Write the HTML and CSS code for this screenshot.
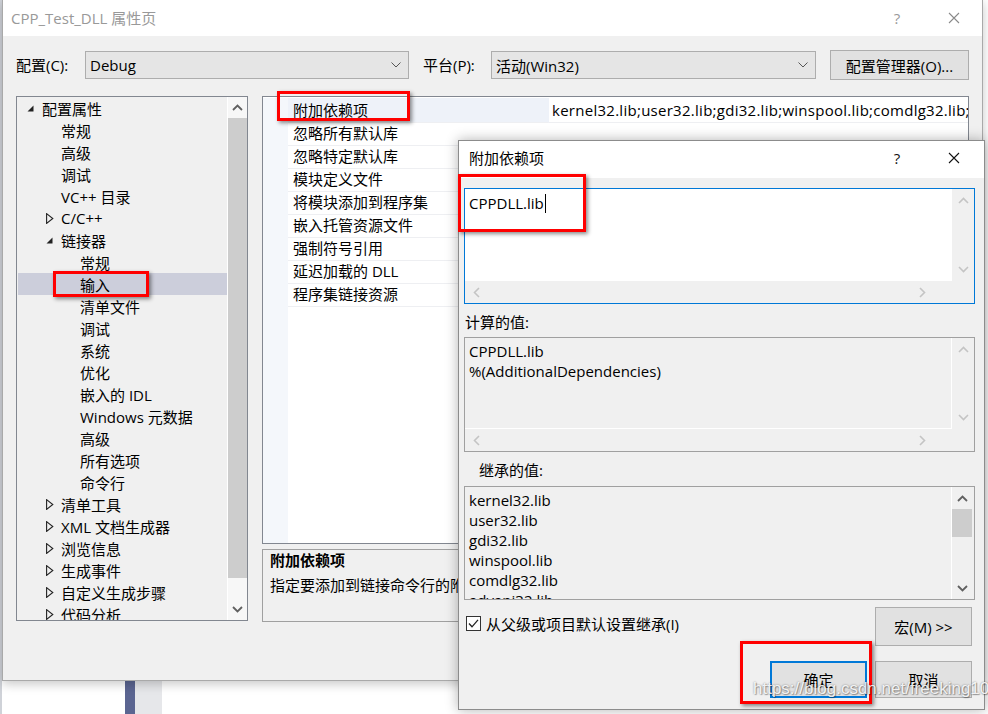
FILE: index.html
```html
<!DOCTYPE html>
<html lang="zh-CN">
<head>
<meta charset="utf-8">
<title>CPP_Test_DLL 属性页</title>
<link rel="stylesheet" href="styles.css">
</head>
<body>
<div class="edge"></div>
<div class="deskbar1"></div>
<div class="deskbar2"></div>

<div class="win main">
  <div class="titlebar">
    <span class="title">CPP_Test_DLL 属性页</span>
    <span class="cap help inactive">?</span>
    <span class="cap"><svg width="12" height="12" viewBox="0 0 12 12"><path d="M1 1L11 11M11 1L1 11" stroke="#8a8a8a" stroke-width="1.1" fill="none"/></svg></span>
  </div>
  <div class="mbody">
    <div class="cfgrow">
      <span class="lbl l1">配置(C):</span>
      <div class="combo c1"><span>Debug</span><svg width="10" height="6" viewBox="0 0 10 6"><polyline points="0.5,0.5 5,5 9.5,0.5" fill="none" stroke="#555" stroke-width="1"/></svg></div>
      <span class="lbl l2">平台(P):</span>
      <div class="combo c2"><span>活动(Win32)</span><svg width="10" height="6" viewBox="0 0 10 6"><polyline points="0.5,0.5 5,5 9.5,0.5" fill="none" stroke="#555" stroke-width="1"/></svg></div>
      <div class="btn cfgmgr">配置管理器(O)...</div>
    </div>
    <div class="content">
      <div class="tree">
        <div class="tlist">
          <div class="trow lv0"><span class="tg"><svg width="7" height="7" viewBox="0 0 7 7"><polygon points="6.5,0.5 6.5,6.5 0.5,6.5" fill="#222"/></svg></span>配置属性</div>
          <div class="trow lv1"><span class="tg"></span>常规</div>
          <div class="trow lv1"><span class="tg"></span>高级</div>
          <div class="trow lv1"><span class="tg"></span>调试</div>
          <div class="trow lv1"><span class="tg"></span>VC++ 目录</div>
          <div class="trow lv1"><span class="tg"><svg width="8" height="11" viewBox="0 0 8 11"><polygon points="0.6,0.6 6.8,5.5 0.6,10.4" fill="none" stroke="#222" stroke-width="1.1"/></svg></span>C/C++</div>
          <div class="trow lv1"><span class="tg"><svg width="7" height="7" viewBox="0 0 7 7"><polygon points="6.5,0.5 6.5,6.5 0.5,6.5" fill="#222"/></svg></span>链接器</div>
          <div class="trow lv2"><span class="tg"></span>常规</div>
          <div class="trow lv2 sel"><span class="tg"></span>输入</div>
          <div class="trow lv2"><span class="tg"></span>清单文件</div>
          <div class="trow lv2"><span class="tg"></span>调试</div>
          <div class="trow lv2"><span class="tg"></span>系统</div>
          <div class="trow lv2"><span class="tg"></span>优化</div>
          <div class="trow lv2"><span class="tg"></span>嵌入的 IDL</div>
          <div class="trow lv2"><span class="tg"></span>Windows 元数据</div>
          <div class="trow lv2"><span class="tg"></span>高级</div>
          <div class="trow lv2"><span class="tg"></span>所有选项</div>
          <div class="trow lv2"><span class="tg"></span>命令行</div>
          <div class="trow lv1"><span class="tg"><svg width="8" height="11" viewBox="0 0 8 11"><polygon points="0.6,0.6 6.8,5.5 0.6,10.4" fill="none" stroke="#222" stroke-width="1.1"/></svg></span>清单工具</div>
          <div class="trow lv1"><span class="tg"><svg width="8" height="11" viewBox="0 0 8 11"><polygon points="0.6,0.6 6.8,5.5 0.6,10.4" fill="none" stroke="#222" stroke-width="1.1"/></svg></span>XML 文档生成器</div>
          <div class="trow lv1"><span class="tg"><svg width="8" height="11" viewBox="0 0 8 11"><polygon points="0.6,0.6 6.8,5.5 0.6,10.4" fill="none" stroke="#222" stroke-width="1.1"/></svg></span>浏览信息</div>
          <div class="trow lv1"><span class="tg"><svg width="8" height="11" viewBox="0 0 8 11"><polygon points="0.6,0.6 6.8,5.5 0.6,10.4" fill="none" stroke="#222" stroke-width="1.1"/></svg></span>生成事件</div>
          <div class="trow lv1"><span class="tg"><svg width="8" height="11" viewBox="0 0 8 11"><polygon points="0.6,0.6 6.8,5.5 0.6,10.4" fill="none" stroke="#222" stroke-width="1.1"/></svg></span>自定义生成步骤</div>
          <div class="trow lv1"><span class="tg"><svg width="8" height="11" viewBox="0 0 8 11"><polygon points="0.6,0.6 6.8,5.5 0.6,10.4" fill="none" stroke="#222" stroke-width="1.1"/></svg></span>代码分析</div>
        </div>
        <div class="tscroll">
          <div class="sbtn"><svg width="11" height="7" viewBox="0 0 11 7"><polyline points="1,6 5.5,1.5 10,6" fill="none" stroke="#606060" stroke-width="1.8"/></svg></div>
          <div class="sthumb"></div>
          <div class="strack"></div>
          <div class="sbtn"><svg width="11" height="7" viewBox="0 0 11 7"><polyline points="1,1 5.5,5.5 10,1" fill="none" stroke="#606060" stroke-width="1.8"/></svg></div>
        </div>
      </div>
      <div class="rightcol">
        <div class="pgrid">
          <div class="prow first"><span class="pm"></span><span class="pn">附加依赖项</span><span class="pv">kernel32.lib;user32.lib;gdi32.lib;winspool.lib;comdlg32.lib;advapi32.lib</span></div>
          <div class="prow"><span class="pm"></span><span class="pn">忽略所有默认库</span><span class="pv"></span></div>
          <div class="prow"><span class="pm"></span><span class="pn">忽略特定默认库</span><span class="pv"></span></div>
          <div class="prow"><span class="pm"></span><span class="pn">模块定义文件</span><span class="pv"></span></div>
          <div class="prow"><span class="pm"></span><span class="pn">将模块添加到程序集</span><span class="pv"></span></div>
          <div class="prow"><span class="pm"></span><span class="pn">嵌入托管资源文件</span><span class="pv"></span></div>
          <div class="prow"><span class="pm"></span><span class="pn">强制符号引用</span><span class="pv"></span></div>
          <div class="prow"><span class="pm"></span><span class="pn">延迟加载的 DLL</span><span class="pv"></span></div>
          <div class="prow"><span class="pm"></span><span class="pn">程序集链接资源</span><span class="pv"></span></div>
          <div class="pfill"><span class="pm"></span></div>
        </div>
        <div class="desc">
          <div class="dtitle-b">附加依赖项</div>
          <div class="dtext">指定要添加到链接命令行的附加项。[例如 kernel32.lib]</div>
        </div>
      </div>
    </div>
  </div>
</div>

<div class="win dlg">
  <div class="dtitle">
    <span class="dname">附加依赖项</span>
    <span class="cap help">?</span>
    <span class="cap"><svg width="12" height="12" viewBox="0 0 12 12"><path d="M1 1L11 11M11 1L1 11" stroke="#111" stroke-width="1.1" fill="none"/></svg></span>
  </div>
  <div class="dbody">
    <div class="box edit">
      <div class="boxtext"><span>CPPDLL.lib</span><span class="caret"></span></div>
      <div class="vs">
        <svg width="11" height="7" viewBox="0 0 11 7"><polyline points="1,6 5.5,1.5 10,6" fill="none" stroke="#c4c4c4" stroke-width="1.6"/></svg>
        <svg width="11" height="7" viewBox="0 0 11 7"><polyline points="1,1 5.5,5.5 10,1" fill="none" stroke="#c4c4c4" stroke-width="1.6"/></svg>
      </div>
      <div class="hs">
        <svg width="7" height="11" viewBox="0 0 7 11"><polyline points="6,1 1.5,5.5 6,10" fill="none" stroke="#c4c4c4" stroke-width="1.6"/></svg>
        <svg width="7" height="11" viewBox="0 0 7 11"><polyline points="1,1 5.5,5.5 1,10" fill="none" stroke="#c4c4c4" stroke-width="1.6"/></svg>
      </div>
      <div class="corner"></div>
    </div>
    <div class="dlabel">计算的值:</div>
    <div class="box ro">
      <div class="boxtext"><div>CPPDLL.lib</div><div>%(AdditionalDependencies)</div></div>
      <div class="vs">
        <svg width="11" height="7" viewBox="0 0 11 7"><polyline points="1,6 5.5,1.5 10,6" fill="none" stroke="#c4c4c4" stroke-width="1.6"/></svg>
        <svg width="11" height="7" viewBox="0 0 11 7"><polyline points="1,1 5.5,5.5 10,1" fill="none" stroke="#c4c4c4" stroke-width="1.6"/></svg>
      </div>
      <div class="hs">
        <svg width="7" height="11" viewBox="0 0 7 11"><polyline points="6,1 1.5,5.5 6,10" fill="none" stroke="#c4c4c4" stroke-width="1.6"/></svg>
        <svg width="7" height="11" viewBox="0 0 7 11"><polyline points="1,1 5.5,5.5 1,10" fill="none" stroke="#c4c4c4" stroke-width="1.6"/></svg>
      </div>
      <div class="corner"></div>
    </div>
    <div class="dlabel l2">继承的值:</div>
    <div class="box inh">
      <div class="boxtext">
        <div>kernel32.lib</div>
        <div>user32.lib</div>
        <div>gdi32.lib</div>
        <div>winspool.lib</div>
        <div>comdlg32.lib</div>
        <div>advapi32.lib</div>
      </div>
      <div class="vs2">
        <div class="sbtn2"><svg width="11" height="7" viewBox="0 0 11 7"><polyline points="1,6 5.5,1.5 10,6" fill="none" stroke="#606060" stroke-width="1.8"/></svg></div>
        <div class="thumb2"></div>
        <div class="track2"></div>
        <div class="sbtn2"><svg width="11" height="7" viewBox="0 0 11 7"><polyline points="1,1 5.5,5.5 10,1" fill="none" stroke="#606060" stroke-width="1.8"/></svg></div>
      </div>
    </div>
    <div class="dfoot">
      <div class="frow1">
        <div class="chk"><span class="cbox"><svg width="13" height="13" viewBox="0 0 13 13"><polyline points="2,6.5 5,9.8 11,2.8" fill="none" stroke="#222" stroke-width="1.3"/></svg></span><span>从父级或项目默认设置继承(I)</span></div>
        <div class="btn dbtn">宏(M) &gt;&gt;</div>
      </div>
      <div class="frow2">
        <div class="btn dbtn ok">确定</div>
        <div class="btn dbtn">取消</div>
      </div>
    </div>
  </div>
</div>

<div class="mark m1"></div>
<div class="mark m2"></div>
<div class="mark m3"></div>
<div class="mark m4"></div>
<div class="wm">https://blog.csdn.net/freeking101</div>
</body>
</html>
```
FILE: styles.css
```css
* { box-sizing: border-box; }
body {
  margin: 0;
  width: 988px;
  height: 714px;
  position: relative;
  overflow: hidden;
  background: #fff;
  font-family: "Open Sans", "Noto Sans CJK SC", sans-serif;
  font-size: 15px;
  color: #000;
}
.edge { position: absolute; left: 0; top: 0; width: 2px; height: 714px; background: #cfd2d8; }
.deskbar1 { position: absolute; left: 125px; top: 681px; width: 10px; height: 33px; background: #5b6591; }
.deskbar2 { position: absolute; left: 135px; top: 681px; width: 27px; height: 33px; background: #e6e7ea; }

.win { position: absolute; display: flex; flex-direction: column; }
.main {
  left: 2px; top: 0; width: 981px; height: 681px;
  border: 1px solid #a9a9a9; border-top: none;
  background: #f0f0f0;
  box-shadow: 0 3px 10px rgba(0,0,0,.22);
}
.titlebar { height: 36px; flex: none; background: #fff; display: flex; align-items: center; padding-left: 8px; padding-right: 5px; padding-bottom: 1px; }
.title { flex: 1; color: #999; line-height: 20px; }
.cap { width: 46px; height: 36px; display: flex; align-items: center; justify-content: center; color: #111; }
.cap.help { margin-right: 11px; }
.cap.inactive { color: #999; }

.mbody { flex: 1; padding: 14px 0 0 13px; display: flex; flex-direction: column; }
.cfgrow { height: 30px; display: flex; align-items: center; }
.lbl { line-height: 20px; }
.l1 { width: 69px; }
.l2 { width: 68px; margin-left: 14px; }
.combo {
  height: 28px; border: 1px solid #adadad; background: #e5e5e5;
  display: flex; align-items: center; justify-content: space-between;
  padding: 0 7px 0 4px;
}
.c1 { width: 324px; }
.c2 { width: 325px; }
.btn {
  border: 1px solid #adadad; background: #e1e1e1;
  display: flex; align-items: center; justify-content: center;
}
.cfgmgr { width: 139px; height: 30px; margin-left: 14px; }

.content { margin-top: 16px; display: flex; gap: 14px; }
.tree { width: 232px; height: 525px; border: 1px solid #828790; background: #f0f0f0; display: flex; overflow: hidden; }
.tlist { flex: 1; padding-top: 0; overflow: hidden; }
.trow { height: 22px; display: flex; align-items: center; white-space: nowrap; }
.tg { width: 16px; flex: none; display: flex; align-items: center; padding-left: 1px; }
.lv0 { padding-left: 9px; }
.lv1 { padding-left: 28px; }
.lv2 { padding-left: 47px; }
.sel { background: #cccedb; margin-left: 1px; padding-left: 46px; }
.tscroll { width: 20px; flex: none; display: flex; flex-direction: column; background: #f7f7f7; border-left: 1px solid #fff; }
.sbtn { height: 21px; display: flex; align-items: center; justify-content: center; flex: none; }
.sthumb { height: 460px; background: #cdcdcd; flex: none; }
.strack { flex: 1; }

.rightcol { width: 707px; display: flex; flex-direction: column; }
.pgrid { height: 448px; border: 1px solid #828790; background: #fff; padding-top: 1px; display: flex; flex-direction: column; overflow: hidden; }
.prow { height: 23px; flex: none; display: grid; grid-template-columns: 25px 260px 1fr; }
.pm { background: #f4f7fb; }
.pn { padding-left: 5px; line-height: 24px; border-bottom: 1px solid #eeeff2; white-space: nowrap; }
.pv { padding-left: 3px; line-height: 24px; border-bottom: 1px solid #eeeff2; white-space: nowrap; overflow: hidden; letter-spacing: 0.27px; }
.prow.first .pn { background: #eef2f9; }
.prow.first .pv { border-left: 1px solid #eef2f9; }
.pfill { flex: 1; display: grid; grid-template-columns: 25px 1fr; }
.desc { margin-top: 5px; height: 73px; border: 1px solid #a0a0a0; background: #f0f0f0; padding: 0 0 0 7px; white-space: nowrap; overflow: hidden; }
.dtitle-b { font-weight: bold; line-height: 20px; margin-top: 0; }
.dtext { line-height: 20px; margin-top: 5px; }

.dlg {
  left: 458px; top: 140px; width: 527px; height: 570px;
  border: 1px solid #8c8c8c;
  background: #f0f0f0;
  box-shadow: 0 0 12px rgba(0,0,0,.3);
}
.dtitle { height: 37px; flex: none; background: #fff; display: flex; align-items: center; padding-left: 10px; padding-right: 7px; padding-bottom: 3px; }
.dname { flex: 1; line-height: 20px; }
.dtitle .cap { height: 30px; }
.dbody { flex: 1; padding: 10px 9px 0 5px; display: flex; flex-direction: column; }
.box { display: grid; grid-template-columns: 1fr 22px; grid-template-rows: 1fr 22px; }
.edit { height: 116px; border: 1px solid #0078d7; background: #f0f0f0; }
.ro { height: 115px; border: 1px solid #a0a0a0; background: #f0f0f0; }
.inh { height: 114px; border: 1px solid #a0a0a0; background: #f0f0f0; grid-template-rows: 1fr; }
.boxtext { padding: 3px 0 0 4px; line-height: 20px; overflow: hidden; white-space: nowrap; }
.edit .boxtext { background: #fff; padding-top: 4px; display: flex; align-items: flex-start; }
.ro .boxtext { border-right: 1px solid #fff; border-bottom: 1px solid #fff; }
.caret { width: 1px; height: 19px; background: #000; margin-left: 1px; margin-top: 1px; }
.vs { display: flex; flex-direction: column; justify-content: space-between; align-items: center; padding: 8px 0 8px; }
.hs { display: flex; justify-content: space-between; align-items: center; padding: 0 26px 0 8px; }
.corner { background: #f0f0f0; }
.inh .boxtext { border-right: 1px solid #fff; }
.vs2 { display: flex; flex-direction: column; padding-right: 2px; }
.sbtn2 { height: 22px; display: flex; align-items: center; justify-content: center; flex: none; }
.thumb2 { height: 28px; background: #cdcdcd; flex: none; }
.track2 { flex: 1; }
.dlabel { height: 33px; padding-top: 8px; padding-left: 1px; line-height: 20px; flex: none; }
.dlabel.l2 { height: 34px; padding-top: 8px; }
.dfoot { display: flex; flex-direction: column; padding-right: 3px; }
.frow1 { display: flex; justify-content: space-between; align-items: center; margin-top: 7px; }
.chk { display: flex; align-items: center; gap: 5px; padding-left: 2px; margin-top: -6px; }
.cbox { width: 15px; height: 15px; border: 1px solid #333; background: #fff; display: flex; align-items: center; justify-content: center; }
.dbtn { width: 97px; height: 39px; }
.frow2 { display: flex; justify-content: flex-end; gap: 8px; margin-top: 15px; }
.frow2 .dbtn { height: 37px; }
.ok { border: 2px solid #0078d7; }

.mark { position: absolute; border: 3px solid #ff0000; box-shadow: 2px 2px 4px rgba(0,0,0,.45); }
.m1 { left: 277px; top: 91px; width: 133px; height: 30px; }
.m2 { left: 53px; top: 271px; width: 96px; height: 26px; }
.m3 { left: 458px; top: 174px; width: 128px; height: 58px; }
.m4 { left: 740px; top: 641px; width: 132px; height: 63px; }
.wm {
  position: absolute; left: 753px; top: 679px;
  font-family: "Liberation Sans", Arial, sans-serif; font-size: 17px;
  color: rgba(255,255,255,.9);
  text-shadow: 0 0 2px rgba(0,0,0,.45), 1px 1px 1px rgba(0,0,0,.3);
  white-space: nowrap;
}
```
